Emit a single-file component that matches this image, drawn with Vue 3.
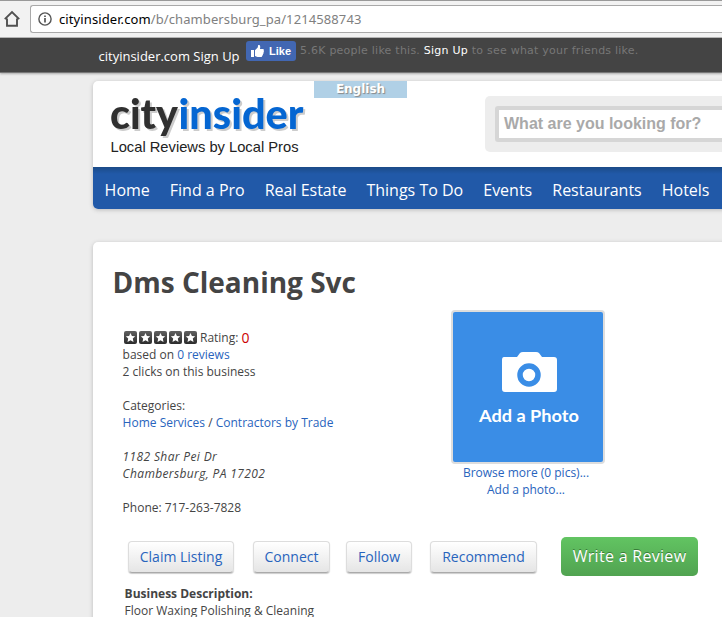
<script setup>
const nav = ['Home', 'Find a Pro', 'Real Estate', 'Things To Do', 'Events', 'Restaurants', 'Hotels']
</script>

<template>
  <div class="page">
    <div class="browser">
      <svg class="home" width="18" height="18" viewBox="0 0 18 18">
        <path d="M1.8 9.2 9 2l7.2 7.2M4 8.5v7.2h10V8.5" fill="none" stroke="#505050" stroke-width="1.9" />
      </svg>
      <div class="address">
        <svg width="14" height="14" viewBox="0 0 14 14">
          <circle cx="7" cy="7" r="6.1" fill="none" stroke="#555" stroke-width="1.4" />
          <path d="M7 6v4.4M7 3.4v1.6" stroke="#555" stroke-width="1.7" />
        </svg>
        <span class="url"><b>cityinsider.com</b>/b/chambersburg_pa/1214588743</span>
      </div>
    </div>

    <div class="topbar">
      <span class="signup">cityinsider.com Sign Up</span>
      <span class="like">
        <svg width="13" height="12" viewBox="0 0 13 12">
          <path d="M0 5h3v7H0zM4 5.2 6.7 2.6 7.2 0h1.2c.9.5 1.1 1.9.5 4h3.2c.9.2 1.1 1.2.5 1.8.5.6.4 1.4-.2 1.8.3.7 0 1.3-.5 1.6.2.7-.1 1.3-.7 1.5 0 .8-.5 1.3-1.4 1.3H6.5L4 11z" fill="#fff" />
        </svg>
        <span>Like</span>
      </span>
      <span class="social">5.6K people like this. <b>Sign Up</b> to see what your friends like.</span>
    </div>

    <header class="header">
      <div class="brand">
        <div class="logo">
          <svg width="221" height="76" viewBox="0 0 221 76">
            <g class="wordmark">
              <text x="17" y="48" textLength="68" lengthAdjust="spacingAndGlyphs" fill="#303030">city</text>
              <text x="85.500" y="48" textLength="125" lengthAdjust="spacingAndGlyphs" fill="#0566d2">insider</text>
            </g>
            <text class="tagline" x="17.500" y="71" textLength="188" lengthAdjust="spacingAndGlyphs">Local Reviews by Local Pros</text>
          </svg>
        </div>
        <span class="language">English</span>
        <div class="search"><div class="field">What are you looking for?</div></div>
      </div>
      <nav class="nav"><a v-for="item in nav" :key="item">{{ item }}</a></nav>
    </header>

    <main class="card">
      <h1>Dms Cleaning Svc</h1>
      <div class="columns">
        <div class="details">
          <div class="rating">
            <svg v-for="n in 5" :key="n" width="13" height="13" viewBox="0 0 13 13">
              <defs><linearGradient id="tile" x2="0" y2="1"><stop stop-color="#606060" /><stop offset="1" stop-color="#2c2c2c" /></linearGradient></defs>
              <rect width="13" height="13" rx="2" fill="url(#tile)" />
              <path d="m6.500 1.900 1.400 3 3.300.4-2.400 2.300.7 3.300-3-1.700-3 1.700.7-3.300-2.400-2.300 3.300-.4z" fill="#fff" />
            </svg>
            <span class="label">Rating:</span><span class="score">0</span>
          </div>
          <div>based on <a>0 reviews</a></div>
          <div>2 clicks on this business</div>
          <div class="gap">Categories:</div>
          <div><a>Home Services</a> / <a>Contractors by Trade</a></div>
          <address class="gap">1182 Shar Pei Dr<br>Chambersburg, PA 17202</address>
          <div class="gap">Phone: 717-263-7828</div>
        </div>
        <div class="photo">
          <div class="picture">
            <svg width="150" height="150" viewBox="0 0 150 150">
              <path d="M51 45h13l3-4q1-1 3-1h13q2 0 3 1l3 4h12q3 0 3 3v29q0 3-3 3H52q-3 0-3-3V48q0-3 2-3z" fill="#fff" />
              <circle cx="76" cy="63" r="9" fill="#fff" stroke="#3a8de6" stroke-width="5.500" />
              <text x="26" y="110" textLength="100" lengthAdjust="spacingAndGlyphs">Add a Photo</text>
            </svg>
          </div>
          <div class="links"><a>Browse more (0 pics)...</a><a>Add a photo...</a></div>
        </div>
      </div>
      <div class="actions">
        <button class="claim">Claim Listing</button>
        <button class="connect">Connect</button>
        <button class="follow">Follow</button>
        <button class="recommend">Recommend</button>
        <button class="write">Write a Review</button>
      </div>
      <div class="description"><b>Business Description:</b><br>Floor Waxing Polishing &amp; Cleaning</div>
    </main>
  </div>
</template>

<style>
body { background: #ededed; overflow: hidden; }
</style>

<style scoped>
* { box-sizing: border-box; }
.page { width: 722px; height: 617px; overflow: hidden; background: #ededed; font-family: "Open Sans", sans-serif; color: #444; white-space: nowrap; }
.browser { height: 38px; display: flex; padding: 4px 0 0 3px; background: #f2f2f2; border-top: 1px solid #999; border-bottom: 1px solid #b5b5b5; }
.home { margin-top: 5px; flex: none; }
.address { flex: 1; height: 28px; margin-left: 9px; padding-left: 7px; display: flex; align-items: center; gap: 7px; background: #fff; border: 1px solid #a9a9a9; border-right: 0; border-radius: 3px 0 0 3px; }
.url { font: 13px/18px "Noto Sans", sans-serif; letter-spacing: .1px; color: #808080; }
.url b { font-weight: 400; color: #000; }
.topbar { height: 35px; display: flex; align-items: flex-start; padding: 3px 0 0 98px; background: #444; border-bottom: 1px solid #777; box-shadow: 0 1px 2px #aaa; }
.signup { width: 148px; flex: none; padding: 6px 0 0 .5px; font-size: 13px; line-height: 18px; color: #fff; }
.like { width: 50px; flex: none; height: 20px; display: flex; align-items: center; gap: 5px; padding-left: 5px; background: #4267b2; border-radius: 3px; color: #fff; font: bold 11px "Liberation Sans", sans-serif; }
.social { margin-left: 4px; font: 11px/20px "DejaVu Sans", sans-serif; letter-spacing: .235px; color: #777; }
.social b { font-weight: 400; color: #fff; }
.header { width: 660px; height: 128px; margin: 8px 0 0 93px; border-radius: 5px; background: #fff; overflow: hidden; box-shadow: 0 1px 4px #bbb; }
.brand { height: 86px; display: flex; align-items: flex-start; }
.logo { width: 221px; height: 86px; flex: none; }
.logo svg { display: block; }
.wordmark { font: 900 42px Lato, sans-serif; filter: drop-shadow(2px 2px 0 #ccc); }
.tagline { font: 14.500px "Liberation Sans", sans-serif; fill: #222; }
.language { width: 93px; flex: none; height: 17px; text-align: center; background: #b0d0e6; color: #fff; font: bold 12px/17px "DejaVu Sans", sans-serif; text-shadow: 1px 1px 1px #888; }
.search { width: 300px; flex: none; height: 56px; margin: 15px 0 0 78px; padding: 10px; background: #ededed; border-radius: 5px; }
.field { height: 36px; border: 4px solid #d6d6d6; border-radius: 3px; background: #fff; padding-left: 5px; color: #a9a9a9; font: bold 16px/28px "Liberation Sans", sans-serif; }
.nav { height: 42px; display: flex; gap: 20px; padding: 0 11.600px; background: linear-gradient(#1b4b88, #2159a8 7px); color: #fff; font-size: 16px; line-height: 46px; }
.card { width: 660px; height: 400px; margin: 33px 0 0 93px; background: #fff; border-radius: 5px; box-shadow: 0 1px 4px #bbb; }
h1 { margin: 0; padding: 20px 0 0 19.500px; font-size: 28px; line-height: 40px; }
a { color: #2864bd; }
.nav a { color: #fff; }
.columns { display: flex; height: 230px; }
.details { width: 358px; padding: 27px 0 0 29.600px; font-size: 12px; line-height: 17px; }
.rating { height: 17px; display: flex; align-items: center; gap: 2px; padding-left: 1.400px; }
.label { margin-left: 1px; }
.score { color: #c00; font-size: 14px; margin-left: 1px; }
.gap { margin-top: 17px; }
address { letter-spacing: .36px; }
.photo { width: 154px; padding-top: 8px; font-size: 12px; line-height: 17px; }
.links { width: 150px; display: flex; flex-direction: column; align-items: center; }
.picture { width: 154px; height: 154px; border: 2px solid #ddd; border-radius: 4px; background: #3a8de6; }
.picture svg { display: block; }
.picture text { font: bold 17px Lato, sans-serif; fill: #fff; }
.actions { height: 39px; display: flex; align-items: center; padding-left: 35px; margin-top: 5px; }
button { flex: none; height: 32px; padding: 0 0 1px; border: 1px solid #ddd; border-bottom-color: #aaa; border-radius: 4px; background: linear-gradient(#fff, #e5e5e5); box-shadow: 0 1px 1px #ccc; color: #2864bd; font: 14px "Open Sans", sans-serif; }
.claim { width: 106px; }
.connect { width: 77px; margin-left: 19px; }
.follow { width: 66px; margin-left: 16px; }
.recommend { width: 107px; margin-left: 18px; }
.write { width: 137px; height: 39px; margin-left: 24px; border: 0; border-radius: 5px; background: linear-gradient(#62c462, #51a351); box-shadow: none; color: #fff; font-size: 16px; letter-spacing: .3px; text-shadow: 0 -1px 0 #397d39; }
.description { padding: 9px 0 0 31.600px; font-size: 12px; line-height: 17px; }
</style>
